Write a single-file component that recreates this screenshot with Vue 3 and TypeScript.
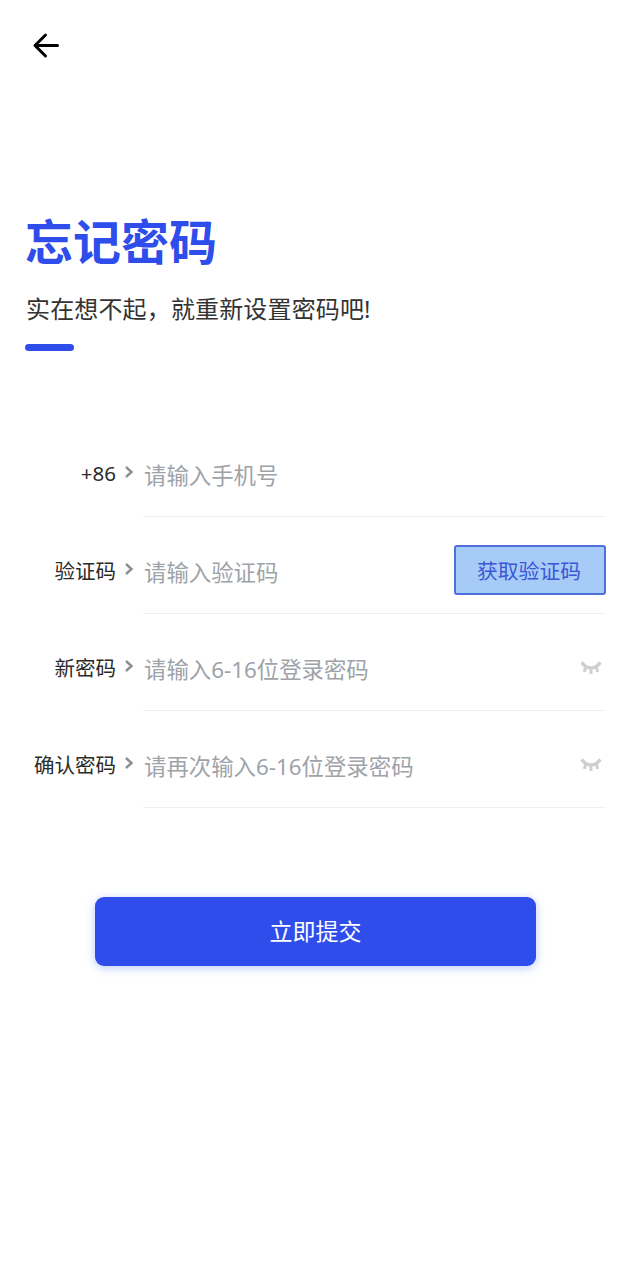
<template>
  <div class="page">
    <!-- Header -->
    <header class="header">
      <svg class="back" width="30" height="30" viewBox="0 0 30 30" fill="none">
        <path d="M26.5 14.5H4M14.5 4L4 14.5L14.5 25" stroke="#000" stroke-width="3" stroke-linecap="round" stroke-linejoin="round" />
      </svg>
    </header>

    <!-- Title -->
    <section class="intro">
      <h1>忘记密码</h1>
      <p>实在想不起，就重新设置密码吧!</p>
      <div class="bar"></div>
    </section>

    <!-- Form -->
    <form class="form" @submit.prevent>
      <div v-for="row in rows" :key="row.label" class="row">
        <label class="label">{{ row.label }}</label>
        <svg class="chevron" width="10" height="14" viewBox="0 0 10 14" fill="none">
          <path d="M2 2L7.5 7L2 12" stroke="#8b8f94" stroke-width="2.4" />
        </svg>
        <div class="field">
          <input :placeholder="row.placeholder" :type="row.eye ? 'password' : 'text'" />
          <button v-if="row.code" type="button" class="code-btn">获取验证码</button>
          <svg v-if="row.eye" class="eye" width="24" height="16" viewBox="0 0 24 16" fill="none">
            <path d="M2.5 2.5L6 6C9 8.5 15 8.5 18 6L21.5 2.5" stroke="#cfcfcf" stroke-width="3.4" />
            <path d="M6.5 7L5.5 12M12 8V14M17.5 7L18.5 12" stroke="#cfcfcf" stroke-width="3" />
          </svg>
        </div>
      </div>

      <button type="submit" class="submit">立即提交</button>
    </form>
  </div>
</template>

<script setup lang="ts">
interface Row {
  label: string
  placeholder: string
  code?: boolean
  eye?: boolean
}

const rows: Row[] = [
  { label: '+86', placeholder: '请输入手机号' },
  { label: '验证码', placeholder: '请输入验证码', code: true },
  { label: '新密码', placeholder: '请输入6-16位登录密码', eye: true },
  { label: '确认密码', placeholder: '请再次输入6-16位登录密码', eye: true }
]
</script>

<style>
html,
body {
  margin: 0;
  background: #fff;
}
</style>

<style scoped>
.page {
  height: 1280px;
  overflow: hidden;
  background: #fff;
  font-family: "Noto Sans", "Noto Sans CJK SC", sans-serif;
  color: #222;
}

.header {
  height: 90px;
  padding: 31px 0 0 31px;
  box-sizing: border-box;
}

.back {
  display: block;
}

.intro {
  padding: 122px 0 0 25px;
}

.intro h1 {
  margin: 0;
  font-size: 48px;
  line-height: 60px;
  font-weight: 700;
  color: #2f4deb;
}

.intro p {
  margin: 20px 0 0 1px;
  font-size: 24px;
  line-height: 34px;
  letter-spacing: 0.15px;
  color: #333;
}

.bar {
  width: 49px;
  height: 7px;
  margin-top: 18px;
  border-radius: 4px;
  background: #2f4deb;
}

.form {
  margin-top: 69px;
  padding-right: 24px;
}

.row {
  display: flex;
  align-items: center;
  height: 97px;
}

.label {
  width: 116px;
  flex: none;
  margin-top: 9px;
  font-size: 20.5px;
  text-align: right;
  color: #2b2b2b;
  white-space: nowrap;
}

.chevron {
  flex: none;
  margin: 6px 9px 0 8px;
}

.field {
  flex: 1;
  min-width: 0;
  height: 100%;
  display: flex;
  align-items: center;
  box-sizing: border-box;
  padding-top: 14px;
  border-bottom: 1px solid #f0f0f0;
}

.field input {
  flex: 1;
  width: 0;
  min-width: 0;
  height: 40px;
  padding: 0 0 0 1px;
  border: 0;
  outline: 0;
  background: transparent;
  font: inherit;
  font-size: 22.4px;
}

.field input::placeholder {
  color: #9ea3a9;
  opacity: 1;
}

.code-btn {
  flex: none;
  width: 152px;
  height: 50px;
  margin-top: -4px;
  padding: 0 2px 0 0;
  box-sizing: border-box;
  border: 2px solid #4f6fdc;
  border-radius: 3px;
  background: #a6cbf6;
  color: #3c57d6;
  font: inherit;
  font-size: 20.8px;
}

.eye {
  flex: none;
  margin: -3px 3px 0 0;
}

.submit {
  display: block;
  width: 441px;
  height: 69px;
  margin: 89px 0 0 95px;
  padding: 0 0 4px;
  border: 0;
  border-radius: 9px;
  background: #2f4deb;
  box-shadow: 0 2px 10px rgba(60, 110, 235, 0.35);
  color: #fff;
  font: inherit;
  font-size: 23px;
}
</style>
